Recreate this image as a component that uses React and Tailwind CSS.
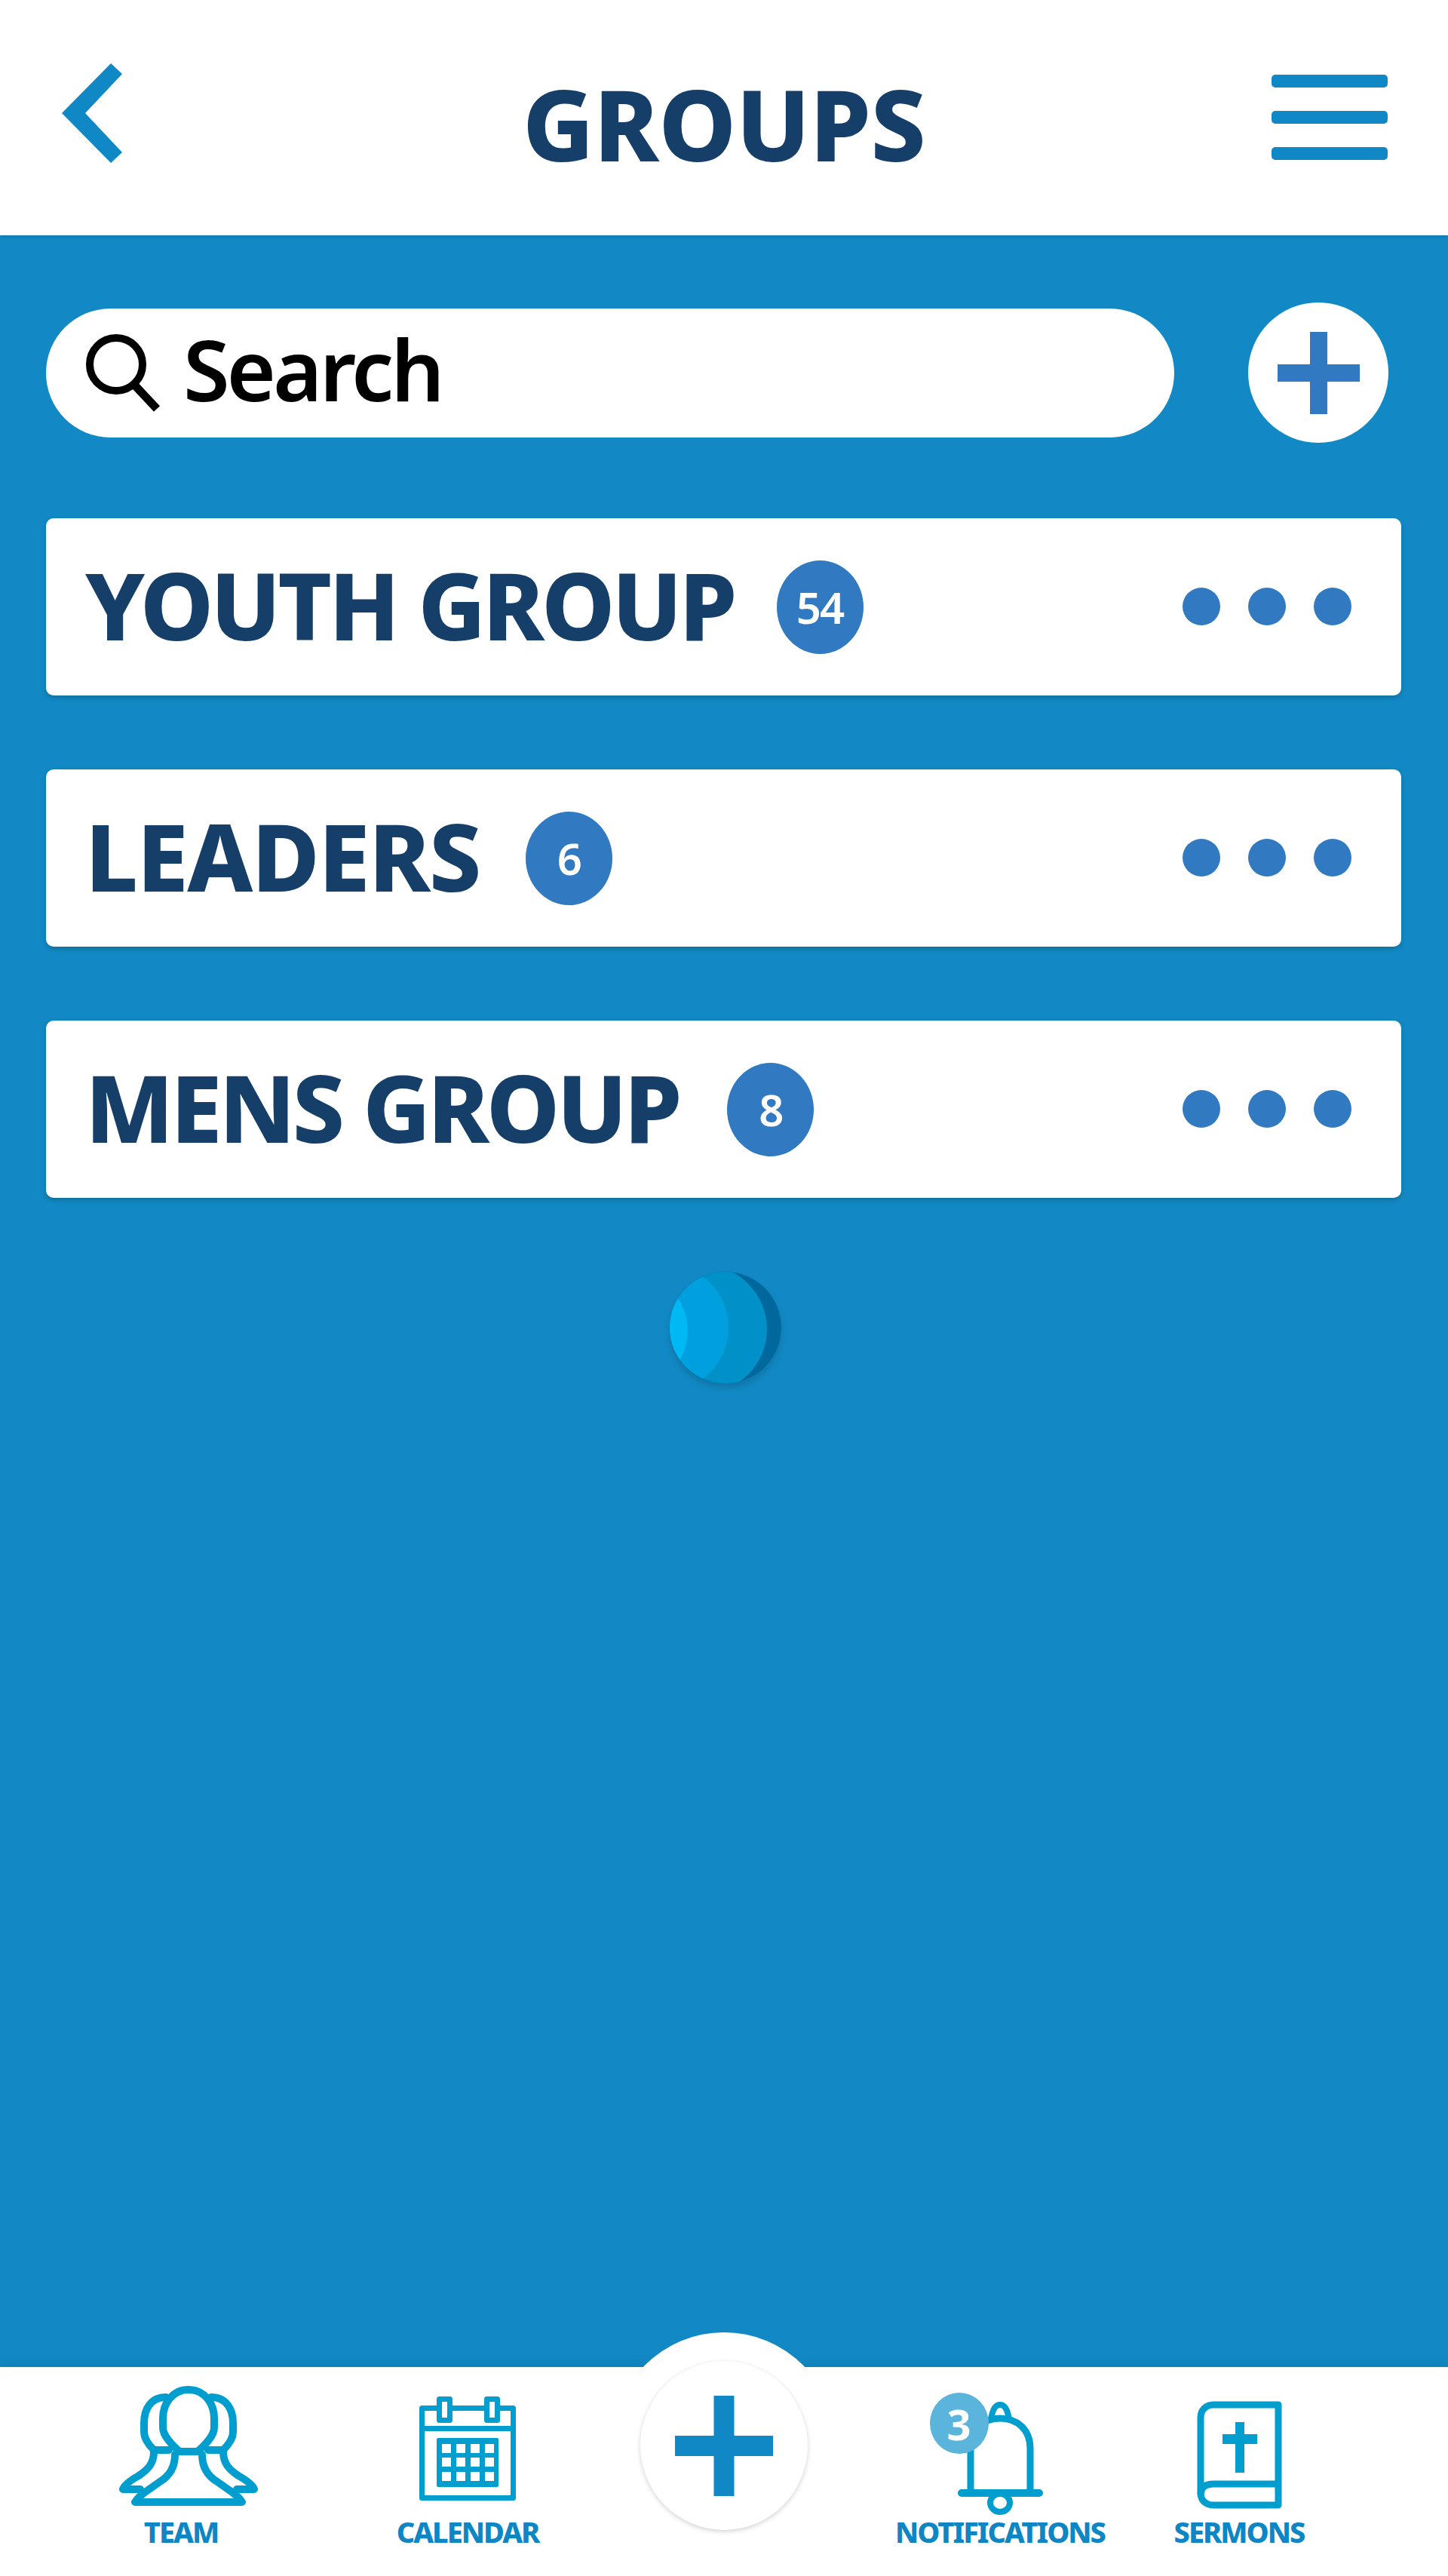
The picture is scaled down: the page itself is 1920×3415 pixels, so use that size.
import React from 'react';

const groups = [
  { name: 'YOUTH GROUP', count: 54, tracking: 'tracking-[-4px]', gap: 'ml-[56px]' },
  { name: 'LEADERS', count: 6, tracking: 'tracking-[-1.6px]', gap: 'ml-[60px]' },
  { name: 'MENS GROUP', count: 8, tracking: 'tracking-[-4px]', gap: 'ml-[64px]' },
];

const TeamIcon = () => (
  <svg width="184" height="160" viewBox="0 0 184 160" fill="none" stroke="#009ecf" strokeWidth="10" strokeLinejoin="round" strokeLinecap="round">
    <path d="M92 6C113 6 126 24 126 44V56C126 68 113 80 104 88H80C71 80 58 68 58 56V44C58 24 71 6 92 6Z" />
    <path d="M74 92C74 112 64 122 54 128L34 142C26 148 24 150 21 155H163C160 150 158 148 150 142L130 128C120 122 110 112 110 92" />
    <path d="M62 16C42 16 33 32 33 50V62C33 72 40 80 46 86H66" />
    <path d="M122 16C142 16 151 32 151 50V62C151 72 144 80 138 86H118" />
    <path d="M46 88C46 104 38 112 26 120C12 128 6 134 5 138H28" />
    <path d="M138 88C138 104 146 112 158 120C172 128 178 134 179 138H156" />
  </svg>
);

const CalendarIcon = () => (
  <svg width="128" height="138" viewBox="0 0 128 138" fill="none">
    <rect x="3.5" y="15.5" width="121" height="119" stroke="#009ecf" strokeWidth="7" strokeLinejoin="round" />
    <rect x="3" y="39" width="122" height="7" fill="#009ecf" />
    <rect x="26.5" y="3.5" width="14" height="28" fill="#fff" stroke="#009ecf" strokeWidth="7" strokeLinejoin="round" />
    <rect x="89.5" y="3.5" width="14" height="28" fill="#fff" stroke="#009ecf" strokeWidth="7" strokeLinejoin="round" />
    <rect x="23" y="55" width="82" height="65" rx="2" fill="#009ecf" />
    {[63, 81, 100].map((y) =>
      [30, 49, 68, 87].map((x) => <rect key={`${x}-${y}`} x={x} y={y} width="12" height="12" fill="#fff" />)
    )}
  </svg>
);

const BellIcon = () => (
  <svg width="113" height="150" viewBox="0 0 113 150" fill="none" stroke="#009ecf" strokeWidth="9">
    <path d="M17 120V62C17 36 34 22 56 22C78 22 96 36 96 62V120" />
    <path d="M44 24C46 9 50 4 56 4C62 4 66 9 68 24" strokeWidth="8" />
    <rect x="0" y="116" width="113" height="10" rx="5" fill="#009ecf" stroke="none" />
    <ellipse cx="56" cy="134" rx="13" ry="12" strokeWidth="8" />
  </svg>
);

const BookIcon = () => (
  <svg width="113" height="143" viewBox="0 0 113 143" fill="none">
    <path d="M108 5H22C12 5 5 12 5 22V122C5 132 12 138 22 138H108Z" stroke="#009ecf" strokeWidth="9" strokeLinejoin="round" />
    <path d="M5 124C5 114 12 110 22 110H108" stroke="#009ecf" strokeWidth="9" />
    <rect x="51" y="28" width="12" height="67" fill="#009ecf" />
    <rect x="34" y="44" width="46" height="13" fill="#009ecf" />
  </svg>
);

const Spinner = () => (
  <svg width="148" height="148" viewBox="0 0 148 148" className="block">
    <defs>
      <clipPath id="spinner-clip">
        <circle cx="74" cy="74" r="74" />
      </clipPath>
    </defs>
    <g clipPath="url(#spinner-clip)">
      <rect width="148" height="148" fill="#00689c" />
      <circle cx="44" cy="76" r="85" fill="#0091c9" />
      <circle cx="-6.5" cy="74" r="84.5" fill="#00a0de" />
      <circle cx="-52" cy="78" r="76" fill="#00b8f4" />
    </g>
  </svg>
);

const TabItem = ({ label, width, iconClass, children }) => (
  <div className={`flex flex-col items-center ${width}`}>
    <div className={`h-[196px] flex items-end justify-center ${iconClass}`}>{children}</div>
    <span className="mt-[3px] text-[38px] leading-[38px] font-extrabold tracking-[-2px] text-[#0e86c4]">{label}</span>
  </div>
);

export default function App() {
  return (
    <div className="w-[1920px] h-[3415px] flex flex-col bg-white font-['Noto_Sans',sans-serif] overflow-hidden">
      <header className="relative z-10 h-[312px] shrink-0 grid grid-cols-[1fr_auto_1fr] px-[82px] bg-white shadow-[0_2px_4px_rgba(0,0,0,0.15)]">
        <div className="pt-[84px]">
          <svg width="80" height="132" viewBox="0 0 80 132">
            <path d="M65 0L80 14L31 66L80 118L65 132L0 66Z" fill="#1088c6" />
          </svg>
        </div>
        <h1 className="pt-[92px] text-[130px] leading-[144px] font-extrabold tracking-[-0.5px] text-[#153e69]">GROUPS</h1>
        <div className="pt-[99px] flex flex-col items-end gap-[31px] mr-[-2px]">
          <div className="w-[154px] h-[17px] rounded-[5px] bg-[#1088c6]" />
          <div className="w-[154px] h-[17px] rounded-[5px] bg-[#1088c6]" />
          <div className="w-[154px] h-[17px] rounded-[5px] bg-[#1088c6]" />
        </div>
      </header>

      <main className="flex-1 bg-[#1289c4] pt-[87px] pl-[61px] pr-[62px] flex flex-col gap-[98px]">
        <div className="h-[190px] flex items-center">
          <div className="w-[1496px] h-[171px] rounded-full bg-white flex items-center pl-[52px]">
            <svg width="100" height="104" viewBox="0 0 100 104" fill="none" stroke="#000" strokeWidth="10">
              <circle cx="41" cy="41" r="35" />
              <path d="M65 68L95 100" strokeWidth="11" />
            </svg>
            <span className="ml-[30px] pb-[10px] text-[112px] leading-none font-semibold tracking-[-4px] text-black">Search</span>
          </div>
          <button className="ml-[98px] w-[186px] h-[186px] rounded-full bg-white flex items-center justify-center">
            <svg width="109" height="109" viewBox="0 0 109 109">
              <rect x="43" y="0" width="23" height="109" fill="#317ac2" />
              <rect x="0" y="43" width="109" height="23" fill="#317ac2" />
            </svg>
          </button>
        </div>

        {groups.map((group) => (
          <div
            key={group.name}
            className="h-[235px] rounded-[10px] bg-white flex items-center pl-[52px] pr-[66px] shadow-[0_3px_6px_rgba(0,0,0,0.2)]"
          >
            <span className={`pb-[6px] text-[123px] leading-none font-extrabold text-[#153e69] ${group.tracking}`}>{group.name}</span>
            <span className={`w-[115px] h-[124px] rounded-[50%] bg-[#317ac2] flex items-center justify-center text-[58px] leading-none font-semibold tracking-[-2px] text-white ${group.gap}`}>
              {group.count}
            </span>
            <div className="ml-auto pb-[2px] flex items-center gap-[37px]">
              <span className="w-[50px] h-[50px] rounded-full bg-[#317ac2]" />
              <span className="w-[50px] h-[50px] rounded-full bg-[#317ac2]" />
              <span className="w-[50px] h-[50px] rounded-full bg-[#317ac2]" />
            </div>
          </div>
        ))}

        <div className="flex justify-center ml-[4px]">
          <div className="rounded-full shadow-[0_6px_8px_rgba(0,0,0,0.15)]">
            <Spinner />
          </div>
        </div>
      </main>

      <footer className="relative h-[277px] shrink-0 bg-white flex shadow-[0_-8px_12px_rgba(0,0,0,0.06)]">
        <div className="absolute left-[812px] top-[-46px] w-[296px] h-[296px] rounded-full bg-white" />
        <div className="absolute left-[849px] top-[-8px] w-[222px] h-[224px] rounded-[50%] bg-white flex items-center justify-center shadow-[0_2px_6px_rgba(0,0,0,0.18)]">
          <svg width="130" height="133" viewBox="0 0 130 133">
            <rect x="51.5" y="0" width="27" height="133" fill="#1088c6" />
            <rect x="0" y="53" width="130" height="27" fill="#1088c6" />
          </svg>
        </div>
        <TabItem label="TEAM" width="w-[480px]" iconClass="pb-[12px] ml-[20px]"><TeamIcon /></TabItem>
        <TabItem label="CALENDAR" width="w-[280px]" iconClass="pb-[19px]"><CalendarIcon /></TabItem>
        <div className="w-[400px]" />
        <TabItem label="NOTIFICATIONS" width="w-[332px]" iconClass="">
          <div className="relative">
            <BellIcon />
            <span className="absolute left-[-37px] top-[-12px] w-[78px] h-[81px] rounded-[50%] bg-[#5ab4dc] flex items-center justify-center text-[56px] leading-none font-bold text-white">3</span>
          </div>
        </TabItem>
        <TabItem label="SERMONS" width="w-[302px]" iconClass="pb-[8px]"><BookIcon /></TabItem>
      </footer>
    </div>
  );
}
